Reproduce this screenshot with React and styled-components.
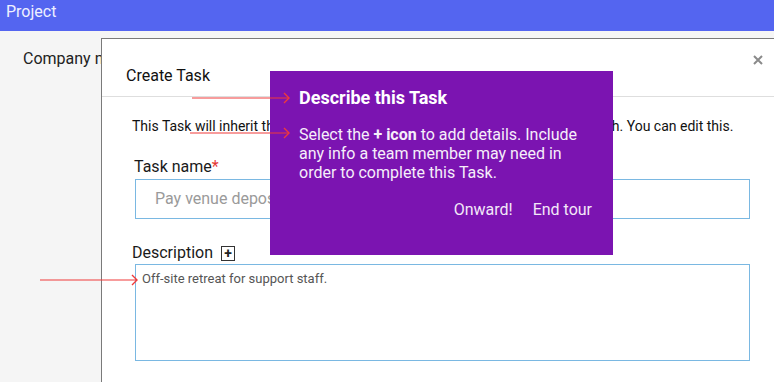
import styled, { createGlobalStyle } from 'styled-components';

const GlobalStyle = createGlobalStyle`
  html, body {
    margin: 0;
    padding: 0;
    width: 774px;
    height: 382px;
    overflow: hidden;
    font-family: Roboto, "Liberation Sans", sans-serif;
    background: #f5f5f5;
  }
`;

const Page = styled.div`
  position: relative;
  width: 774px;
  height: 382px;
  overflow: hidden;
  background: #f5f5f5;
`;

const TopBar = styled.header`
  height: 31px;
  background: #5465f0;
  color: #eef0ff;
  font-size: 16px;
  line-height: 23px;
  padding-left: 6px;
`;

const PageBody = styled.div`
  padding: 18px 23px;
  font-size: 16px;
  color: #222;
`;

const Modal = styled.section`
  position: absolute;
  left: 101px;
  top: 38px;
  width: 720px;
  height: 400px;
  background: #fff;
  border-left: 1px solid #7a7a7a;
  border-top: 1px solid #7a7a7a;
`;

const ModalHeader = styled.div`
  display: flex;
  align-items: flex-end;
  height: 58px;
  box-sizing: border-box;
  padding: 0 0 10px 24px;
  border-bottom: 1px solid #dedede;
  font-size: 16px;
  line-height: 20px;
  color: #111;
`;

const Close = styled.svg`
  position: absolute;
  left: 651px;
  top: 16px;
`;

const ModalBody = styled.div`
  padding: 19px 0 0 30px;
  width: 618px;
`;

const Intro = styled.p`
  margin: 0;
  font-size: 14px;
  line-height: 20px;
  color: #111;
  white-space: nowrap;
`;

const Label = styled.div`
  display: flex;
  align-items: center;
  gap: 8px;
  font-size: 16px;
  line-height: 20px;
  color: #1a1a1a;
  margin: ${(p) => p.$mt || 0}px 0 0 ${(p) => p.$ml || 0}px;
  white-space: nowrap;
`;

const Required = styled.span`
  color: #e53935;
`;

const PlusBox = styled.span`
  width: 12px;
  height: 13px;
  border: 1px solid #333;
  display: flex;
  align-items: center;
  justify-content: center;
  font-size: 14px;
  font-weight: 700;
  line-height: 1;
  color: #222;
`;

const Field = styled.div`
  margin: ${(p) => p.$mt}px 0 0 3px;
  height: ${(p) => p.$h}px;
  box-sizing: border-box;
  border: 1px solid #7ab8e2;
  padding: ${(p) => p.$pad};
  font-size: ${(p) => p.$fs}px;
  color: ${(p) => p.$color};
`;

const Tooltip = styled.div`
  position: absolute;
  left: 270px;
  top: 71px;
  width: 343px;
  height: 184px;
  box-sizing: border-box;
  background: #7b14b1;
  color: #fff;
  padding: 16px 21px 0 29px;
  display: flex;
  flex-direction: column;
`;

const TipTitle = styled.h3`
  margin: 0;
  font-size: 18px;
  font-weight: 700;
  line-height: 22px;
`;

const TipText = styled.p`
  margin: 16px 0 0;
  font-size: 16px;
  line-height: 19px;
  color: #f6eefa;
`;

const TipActions = styled.div`
  display: flex;
  justify-content: flex-end;
  gap: 20px;
  margin-top: 18px;
  font-size: 16px;
  line-height: 20px;
  color: #f3e8f8;
`;

const Arrow = styled.svg`
  position: absolute;
  left: ${(p) => p.$x}px;
  top: ${(p) => p.$y - 6}px;
  overflow: visible;
`;

const RedArrow = ({ x, y, len }) => (
  <Arrow $x={x} $y={y} width={len} height="12">
    <line x1="0" y1="6" x2={len} y2="6" stroke="#f03a3a" strokeWidth="1.2" />
    <polyline
      points={`${len - 5},1 ${len},6 ${len - 5},11`}
      fill="none"
      stroke="#f03a3a"
      strokeWidth="1.4"
    />
  </Arrow>
);

export default function App() {
  return (
    <Page>
      <GlobalStyle />
      <TopBar>Project</TopBar>
      <PageBody>Company name</PageBody>
      <Modal>
        <ModalHeader>Create Task</ModalHeader>
        <Close width="10" height="10" viewBox="0 0 10 10">
          <path d="M1 1L9 9M9 1L1 9" stroke="#8a8a8a" strokeWidth="2" />
        </Close>
        <ModalBody>
          <Intro>
            This Task will inherit the due dates of the Project it's in, along with its approach. You can edit this.
          </Intro>
          <Label $mt={21} $ml={2}>
            <span>
              Task name<Required>*</Required>
            </span>
          </Label>
          <Field $mt={2} $h={40} $pad="9px 19px" $fs={16} $color="#9a9a9a">
            Pay venue deposit
          </Field>
          <Label $mt={24}>
            Description
            <PlusBox>+</PlusBox>
          </Label>
          <Field $mt={1} $h={97} $pad="6px 6px" $fs={13} $color="#555">
            Off-site retreat for support staff.
          </Field>
        </ModalBody>
      </Modal>
      <Tooltip>
        <TipTitle>Describe this Task</TipTitle>
        <TipText>
          Select the <b>+ icon</b> to add details. Include any info a team member may need in
          order to complete this Task.
        </TipText>
        <TipActions>
          <span>Onward!</span>
          <span>End tour</span>
        </TipActions>
      </Tooltip>
      <RedArrow x={192} y={98} len={97} />
      <RedArrow x={190} y={133} len={99} />
      <RedArrow x={40} y={280} len={97} />
    </Page>
  );
}
